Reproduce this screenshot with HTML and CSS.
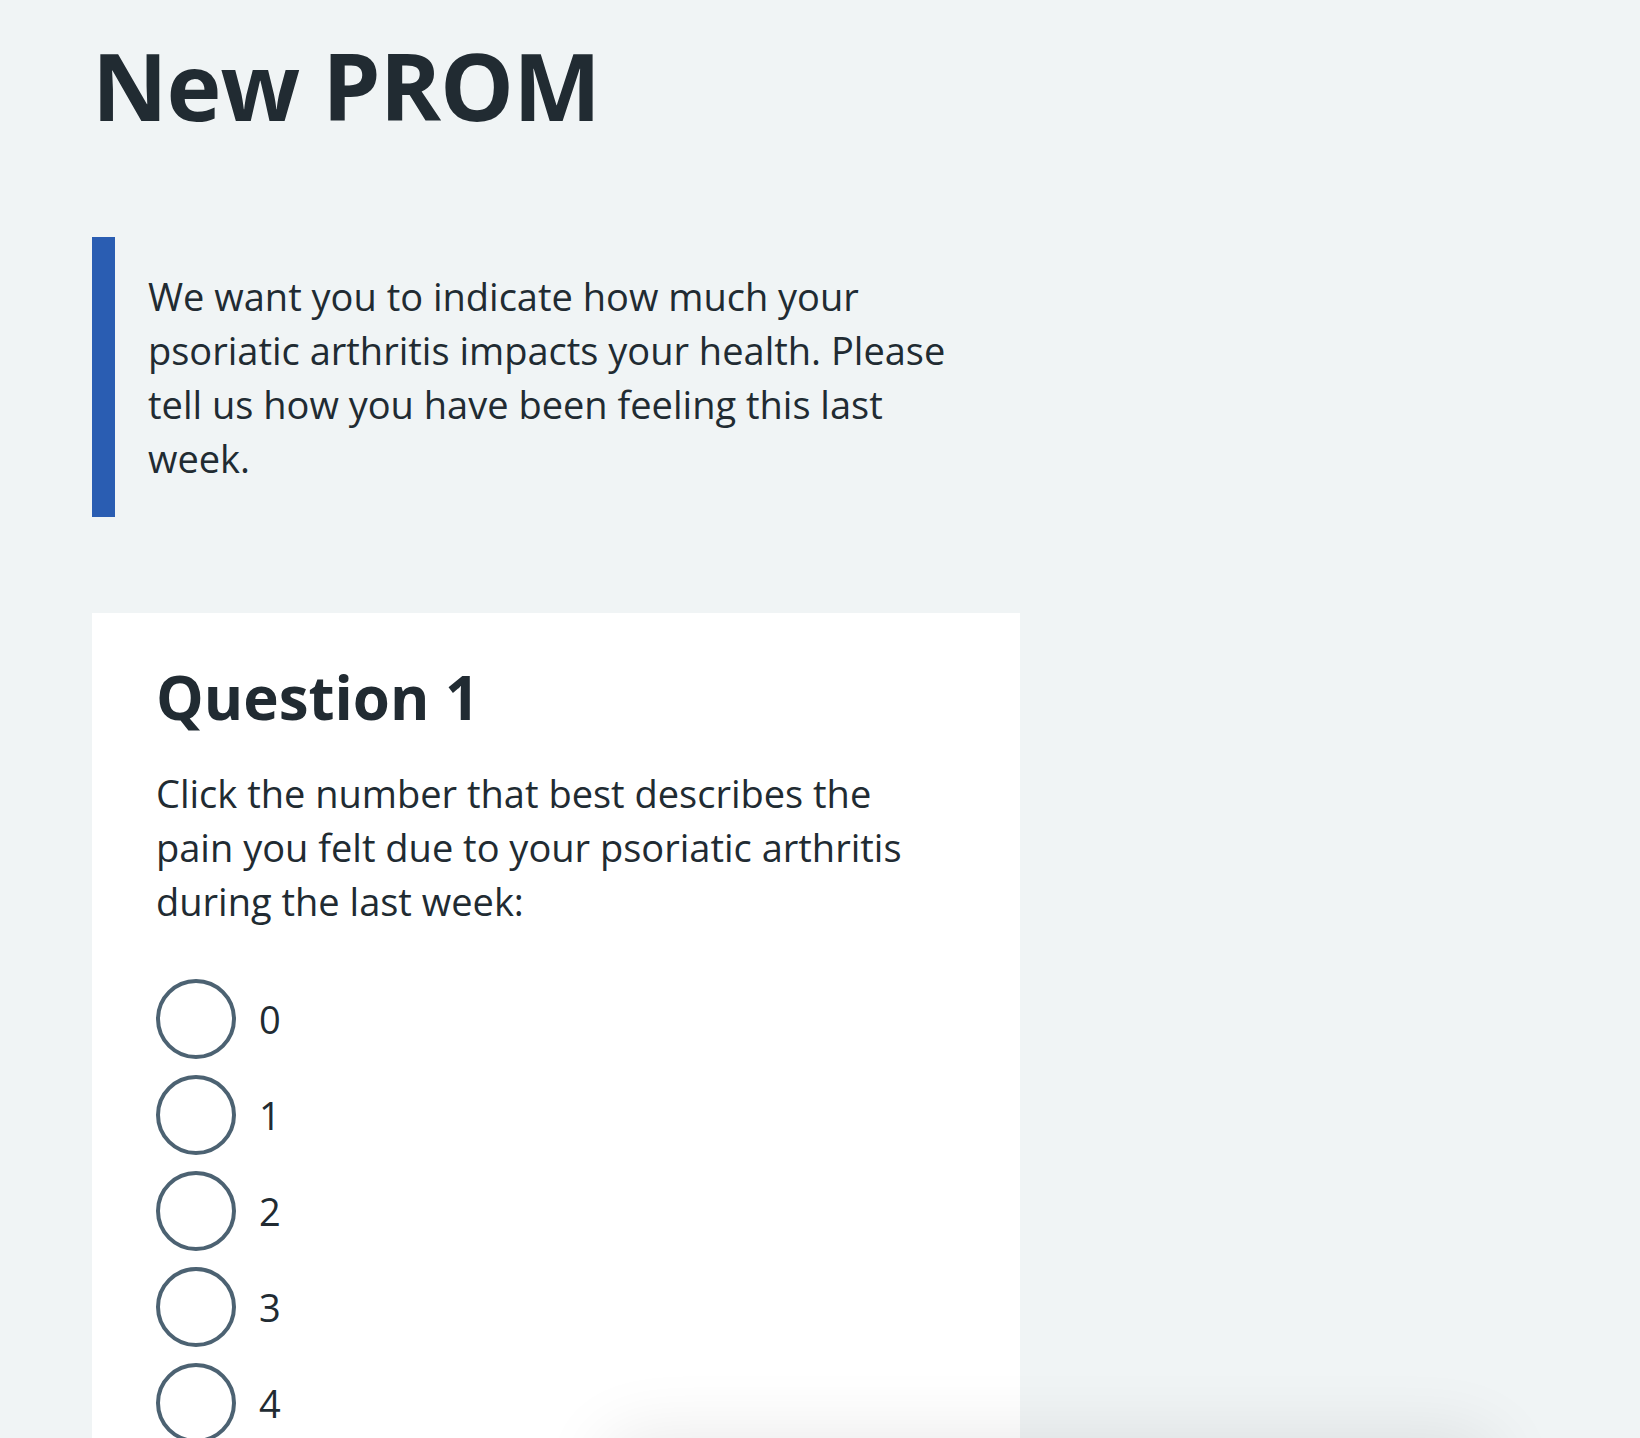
FILE: index.html
```html
<!DOCTYPE html>
<html lang="en">
<head>
    <meta charset="UTF-8">
    <meta name="viewport" content="width=device-width, initial-scale=1.0">
    <title>New PROM</title>
    <link rel="stylesheet" href="styles.css">
</head>
<body>
    <main class="page">
        <h1 class="page-title">New PROM</h1>

        <div class="inset-text">
            <p>We want you to indicate how much your psoriatic arthritis impacts your health. Please tell us how you have been feeling this last week.</p>
        </div>

        <form class="question-card">
            <h2 class="question-title">Question 1</h2>
            <p class="question-text">Click the number that best describes the pain you felt due to your psoriatic arthritis during the last week:</p>
            <div class="radios">
                <label class="radio-item"><input type="radio" name="q1" value="0"><span class="radio-mark"></span><span class="radio-label">0</span></label>
                <label class="radio-item"><input type="radio" name="q1" value="1"><span class="radio-mark"></span><span class="radio-label">1</span></label>
                <label class="radio-item"><input type="radio" name="q1" value="2"><span class="radio-mark"></span><span class="radio-label">2</span></label>
                <label class="radio-item"><input type="radio" name="q1" value="3"><span class="radio-mark"></span><span class="radio-label">3</span></label>
                <label class="radio-item"><input type="radio" name="q1" value="4"><span class="radio-mark"></span><span class="radio-label">4</span></label>
            </div>
        </form>
    </main>
    <div class="bottom-bar"></div>
</body>
</html>
```

FILE: styles.css
```css
body {
    margin: 0;
    background: #f0f4f5;
    color: #212b32;
    font-family: "Open Sans", "Noto Sans", sans-serif;
    overflow: hidden;
}
.page {
    padding: 0 92px;
}
.page-title {
    margin: 32px 0 0;
    font-size: 93px;
    font-weight: 700;
    line-height: 106px;
    letter-spacing: -1px;
}
.inset-text {
    width: 810px;
    margin-top: 99px;
    padding: 32px 0 32px 33px;
    border-left: 23px solid #2a5db2;
}
.inset-text p {
    margin: 0;
    font-size: 38px;
    line-height: 54px;
}
.question-card {
    width: 928px;
    box-sizing: border-box;
    margin-top: 96px;
    padding: 49px 64px 64px;
    background: #fff;
}
.question-title {
    margin: 0;
    font-size: 60px;
    font-weight: 700;
    line-height: 70px;
}
.question-text {
    max-width: 775px;
    margin: 34px 0 0;
    font-size: 38px;
    line-height: 54px;
}
.radios {
    margin-top: 51px;
}
.radio-item {
    display: flex;
    align-items: center;
    gap: 23px;
    height: 80px;
    margin-bottom: 16px;
    cursor: pointer;
}
.radio-item input {
    display: none;
}
.radio-mark {
    width: 80px;
    height: 80px;
    box-sizing: border-box;
    border: 4px solid #4c6272;
    border-radius: 50%;
    background: #fff;
}
.radio-label {
    font-size: 38px;
    line-height: 54px;
}
.bottom-bar {
    position: fixed;
    left: 600px;
    width: 900px;
    bottom: -80px;
    height: 80px;
    border-radius: 40px;
    box-shadow: 0 -4px 70px rgba(0, 0, 0, 0.09);
}
```
